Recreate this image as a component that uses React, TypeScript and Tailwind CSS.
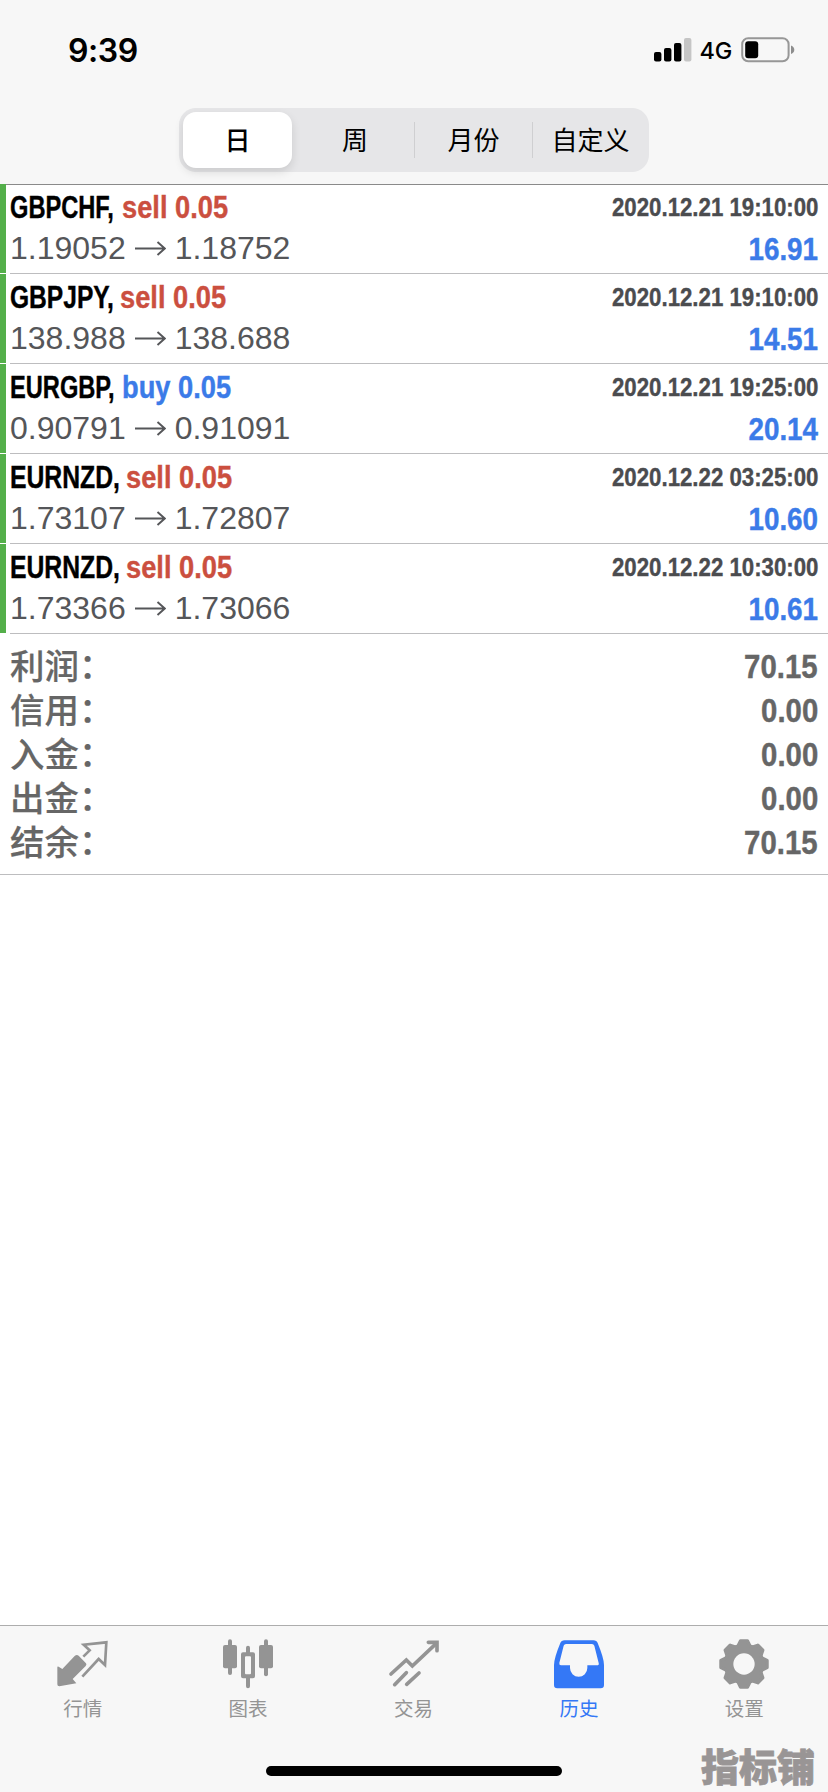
import type { ReactNode } from "react";

type Deal = {
  symbol: string;
  width: string;
  scale: string;
  side: "sell" | "buy";
  from: string;
  to: string;
  time: string;
  profit: string;
};

const deals: Deal[] = [
  { symbol: "GBPCHF,", width: "w-[112px]", scale: "scale-x-[0.75]", side: "sell", from: "1.19052", to: "1.18752", time: "2020.12.21 19:10:00", profit: "16.91" },
  { symbol: "GBPJPY,", width: "w-[110px]", scale: "scale-x-[0.78]", side: "sell", from: "138.988", to: "138.688", time: "2020.12.21 19:10:00", profit: "14.51" },
  { symbol: "EURGBP,", width: "w-[112px]", scale: "scale-x-[0.75]", side: "buy", from: "0.90791", to: "0.91091", time: "2020.12.21 19:25:00", profit: "20.14" },
  { symbol: "EURNZD,", width: "w-[116px]", scale: "scale-x-[0.785]", side: "sell", from: "1.73107", to: "1.72807", time: "2020.12.22 03:25:00", profit: "10.60" },
  { symbol: "EURNZD,", width: "w-[116px]", scale: "scale-x-[0.785]", side: "sell", from: "1.73366", to: "1.73066", time: "2020.12.22 10:30:00", profit: "10.61" },
];

const totals = [
  ["利润", "70.15"],
  ["信用", "0.00"],
  ["入金", "0.00"],
  ["出金", "0.00"],
  ["结余", "70.15"],
];

const condensed =
  "font-['Liberation_Sans',sans-serif] font-bold whitespace-nowrap [-webkit-text-stroke:0.4px_currentColor]";
const cjk = "font-['Noto_Sans_CJK_SC',sans-serif]";

function StatusBar() {
  return (
    <div className="flex h-[100px] items-center justify-between pr-[33px] pl-[68px]">
      <div className="pt-px font-['Inter',sans-serif] text-[32px] leading-none font-semibold tracking-[-0.4px]">9:39</div>
      <div className="flex items-center">
        <svg width="38" height="24" viewBox="0 0 38 24">
          <rect x="0" y="14" width="7.4" height="9.4" rx="2" />
          <rect x="10" y="10" width="7.4" height="13.4" rx="2" />
          <rect x="20" y="5" width="7.4" height="18.4" rx="2" />
          <rect x="30" y="0" width="7.4" height="23.4" rx="2" fill="#c5c5c5" />
        </svg>
        <span className="ml-[8px] pt-px font-['Inter',sans-serif] text-[23.5px] leading-none font-medium tracking-[-0.3px]">4G</span>
        <svg className="ml-[9px]" width="54" height="26" viewBox="0 0 54 26">
          <rect x="1.2" y="1.2" width="46.4" height="23" rx="6" fill="none" stroke="#979797" strokeWidth="2" />
          <rect x="4.2" y="4.2" width="13" height="17" rx="3" />
          <path d="M50 8.5c2.2.8 3.3 2.3 3.3 4.3s-1.1 3.5-3.3 4.3z" fill="#8d8d8d" />
        </svg>
      </div>
    </div>
  );
}

function Segments() {
  return (
    <div
      className={`mx-auto mt-[8px] flex h-[64px] w-[470px] items-center rounded-[17px] bg-[#e6e6e8] p-[4px] text-[26px] leading-none ${cjk}`}
    >
      <div className="flex h-[56px] w-[109px] shrink-0 items-center justify-center rounded-[13px] bg-white pb-[2px] font-medium shadow-[0_4px_10px_rgba(0,0,0,0.12)]">
        日
      </div>
      <div className="flex w-[122px] shrink-0 items-center justify-center pb-[2px] pl-[4px]">周</div>
      <div className="h-[36px] w-px bg-[#cfcfd1]" />
      <div className="flex w-[117px] shrink-0 items-center justify-center pb-[2px]">月份</div>
      <div className="h-[36px] w-px bg-[#cfcfd1]" />
      <div className="flex flex-1 items-center justify-center pb-[2px] pl-[3px]">自定义</div>
    </div>
  );
}

function DealRow({ deal }: { deal: Deal }) {
  return (
    <div className="flex h-[90px]">
      <div className="h-[89px] w-[6px] bg-[#54af4a]" />
      <div className="ml-[4px] flex flex-1 justify-between border-b border-[#bdbdbf] pr-[10px]">
        <div>
          <div className={`mt-[8px] flex h-[32px] items-center text-[31.5px] leading-none ${condensed}`}>
            <div className={deal.width}>
              <div className={`w-max origin-left ${deal.scale}`}>{deal.symbol}</div>
            </div>
            <div
              className={
                deal.side === "sell"
                  ? "origin-left scale-x-[0.865] text-[#cb4f3f]"
                  : "origin-left scale-x-[0.865] text-[#3b7be8]"
              }
            >
              {deal.side} 0.05
            </div>
          </div>
          <div className="mt-[8px] flex h-[32px] items-center font-['Liberation_Sans',sans-serif] text-[32px] leading-none text-[#555659]">
            <span>{deal.from}</span>
            <svg className="mx-[9px]" width="31" height="15" viewBox="0 0 31 15" fill="none" stroke="currentColor" strokeWidth="1.9">
              <path d="M0 7.5H29.5M22.5 1L29.8 7.5L22.5 14" />
            </svg>
            <span>{deal.to}</span>
          </div>
        </div>
        <div className="flex flex-col items-end">
          <div className={`mt-[7px] flex h-[32px] origin-right scale-x-[0.855] items-center text-[26px] leading-none text-[#4b4c4f] ${condensed}`}>
            {deal.time}
          </div>
          <div className={`mt-[10px] flex h-[32px] origin-right scale-x-[0.87] items-center text-[32px] leading-none text-[#3b7be8] ${condensed}`}>
            {deal.profit}
          </div>
        </div>
      </div>
    </div>
  );
}

function Totals() {
  return (
    <div className="h-[241px] border-b border-[#bdbdbf] pt-[10px] pr-[10px] pl-[10px] text-[#666666]">
      {totals.map(([label, value]) => (
        <div key={label} className="flex h-[44px] items-center justify-between">
          <div
            className={`flex items-center pb-[4px] text-[34.5px] leading-none font-medium [-webkit-text-stroke:0.2px_#666666] ${cjk}`}
          >
            {label}
            <span className="pb-[2px]">：</span>
          </div>
          <div className={`origin-right scale-x-[0.89] text-[33px] leading-none ${condensed}`}>{value}</div>
        </div>
      ))}
    </div>
  );
}

const gearPoints = Array.from({ length: 8 }, (_, i) => {
  const base = (i * Math.PI) / 4;
  return [
    [-0.32, 57],
    [-0.15, 70],
    [0.15, 70],
    [0.32, 57],
  ]
    .map(([a, r]) => `${(75 + r * Math.sin(base + a)).toFixed(1)},${(75 - r * Math.cos(base + a)).toFixed(1)}`)
    .join(" ");
}).join(" ");

function QuotesIcon() {
  return (
    <g transform="translate(-2 0)">
      <path
        d="M0 85Q0 81 4 83L15 90L52 51Q58 46 64 50L86 73Q89 77 85 81L46 120L57 133L6 142Q0 142 0 136Z"
        fill="currentColor"
      />
      <path
        d="M78 53L97 34L79 17L147 10L143 78L124 60L75 113"
        fill="none"
        stroke="currentColor"
        strokeWidth="8"
      />
    </g>
  );
}

function ChartIcon() {
  return (
    <g fill="currentColor">
      <rect x="0" y="18" width="42" height="70" rx="6" />
      <rect x="15" y="1" width="12" height="107" rx="6" />
      <rect x="108" y="18" width="42" height="70" rx="6" />
      <rect x="123" y="1" width="12" height="111" rx="6" />
      <path
        fillRule="evenodd"
        d="M69 26a6 6 0 0 1 12 0V40H90a6 6 0 0 1 6 6V112a6 6 0 0 1-6 6H81V142a6 6 0 0 1-12 0V118H60a6 6 0 0 1-6-6V46a6 6 0 0 1 6-6H69ZM69 52a3 3 0 0 0-3 3V103a3 3 0 0 0 3 3H81a3 3 0 0 0 3-3V55a3 3 0 0 0-3-3Z"
      />
    </g>
  );
}

function TradeIcon() {
  return (
    <g fill="none" stroke="currentColor" strokeWidth="11" strokeLinecap="round">
      <path d="M6 105L52 63L70 81L142 13" strokeLinejoin="miter" />
      <path d="M118 10H144V35" />
      <path d="M17 137L52 101M53 136L90 102" />
    </g>
  );
}

function HistoryIcon() {
  return (
    <path
      fill="currentColor"
      fillRule="evenodd"
      d="M32 4H118Q128 4 131 12Q150 58 150 78V138Q150 148 140 148H10Q0 148 0 138V78Q0 58 19 12Q22 4 32 4ZM36 15Q31 15 29 20L16 72Q15 79 21 79H48V87A26 26 0 0 0 100 87V79H129Q136 79 134 72L121 20Q119 15 114 15Z"
    />
  );
}

function SettingsIcon() {
  return (
    <>
      <polygon points={gearPoints} fill="currentColor" stroke="currentColor" strokeWidth="10" strokeLinejoin="round" />
      <circle cx="75" cy="75" r="32" fill="#f7f7f7" />
    </>
  );
}

const tabs: { label: string; icon: ReactNode; active?: boolean }[] = [
  { label: "行情", icon: <QuotesIcon /> },
  { label: "图表", icon: <ChartIcon /> },
  { label: "交易", icon: <TradeIcon /> },
  { label: "历史", icon: <HistoryIcon />, active: true },
  { label: "设置", icon: <SettingsIcon /> },
];

function TabBar() {
  return (
    <div className="relative flex h-[167px] flex-col border-t border-[#adadad] bg-[#f7f7f7]">
      <div className="flex w-[827px] pt-[13px]">
        {tabs.map((tab) => (
          <div
            key={tab.label}
            className={
              tab.active
                ? "flex flex-1 flex-col items-center text-[#3478f6]"
                : "flex flex-1 flex-col items-center text-[#949494]"
            }
          >
            <svg className="overflow-visible" width="50" height="50" viewBox="0 0 150 150">
              {tab.icon}
            </svg>
            <div className={`mt-[9px] text-[19.5px] leading-[20px] ${cjk}`}>{tab.label}</div>
          </div>
        ))}
      </div>
      <div className="mx-auto mt-auto mb-[16px] h-[10px] w-[296px] rounded-full bg-black" />
      <div
        className={`absolute right-[13px] bottom-[8px] text-[38px] leading-[38px] font-black text-[#999595] [-webkit-text-stroke:0.8px_#999595] ${cjk}`}
      >
        指标铺
      </div>
    </div>
  );
}

export default function App() {
  return (
    <div className="flex h-[1792px] w-[828px] flex-col overflow-hidden bg-white text-black">
      <div className="h-[184px] bg-[#f7f7f7]">
        <StatusBar />
        <Segments />
      </div>
      <div className="relative">
        <div className="absolute top-0 right-0 left-[6px] h-px bg-[#8a8a8a]" />
        {deals.map((deal) => (
          <DealRow key={deal.time + deal.symbol} deal={deal} />
        ))}
      </div>
      <Totals />
      <div className="flex-1" />
      <TabBar />
    </div>
  );
}
